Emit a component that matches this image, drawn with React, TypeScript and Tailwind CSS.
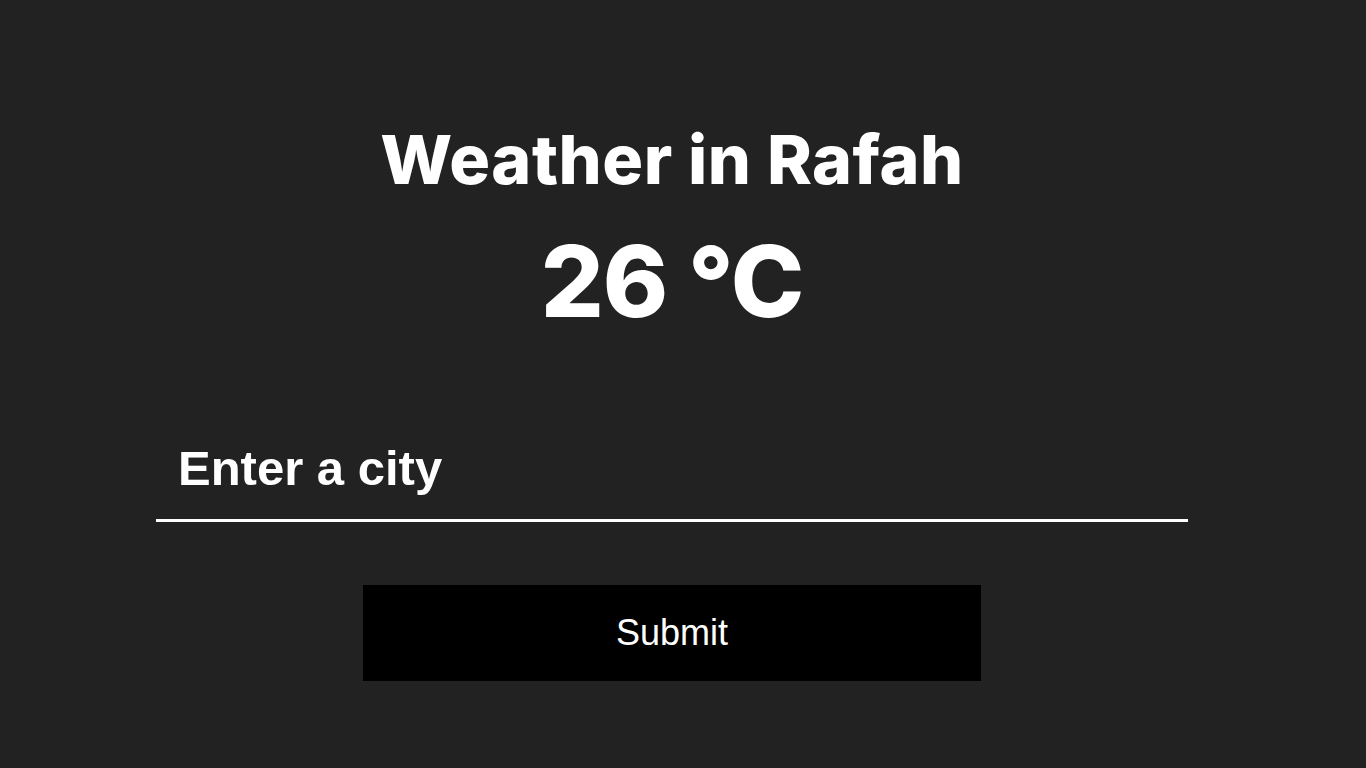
export default function App() {
  return (
    <div className="min-h-screen bg-[#222222] text-white font-['Liberation_Sans',Arial,sans-serif]">
      <div className="w-[1344px] flex flex-col items-center pt-[125px]">
        <h1 className="font-['Inter',sans-serif] font-extrabold text-[68px] leading-none tracking-[0.5px]">
          Weather in Rafah
        </h1>
        <p className="mt-[39px] font-['Inter',sans-serif] font-extrabold text-[99px] leading-none tracking-[-1px]">
          26 °C
        </p>
        <form
          className="mt-[98px] flex flex-col items-center"
          onSubmit={e => e.preventDefault()}
        >
          <input
            type="text"
            placeholder="Enter a city"
            className="w-[1032px] h-[93px] bg-transparent border-b-[3px] border-white pl-[22px] pb-[12px] text-[49px] font-bold text-white placeholder:text-white outline-none"
          />
          <button
            type="submit"
            className="mt-[63px] w-[618px] h-[96px] bg-black text-white text-[36px]"
          >
            Submit
          </button>
        </form>
      </div>
    </div>
  );
}
